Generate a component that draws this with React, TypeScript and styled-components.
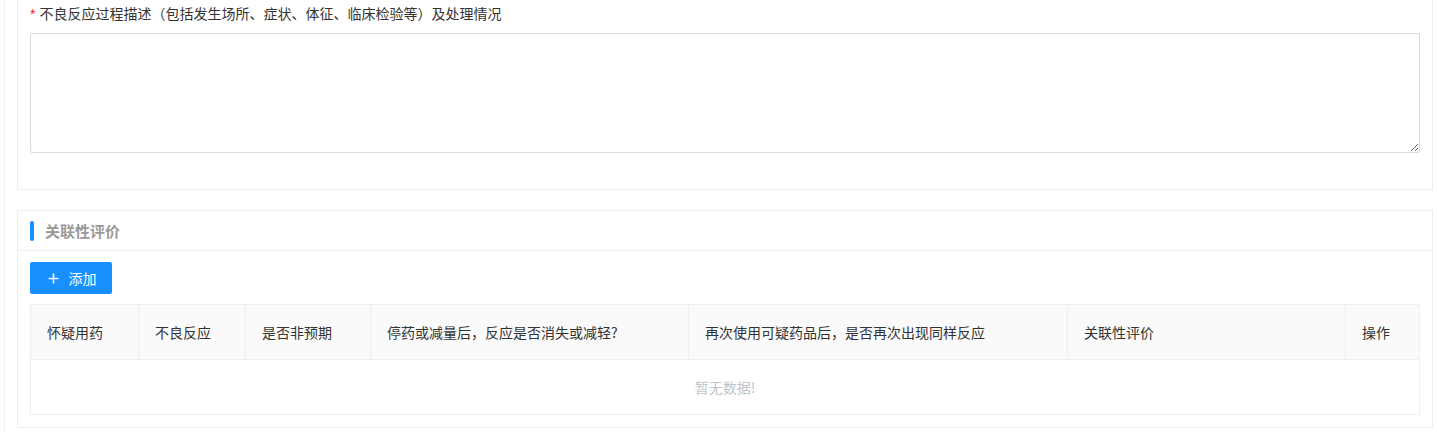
import React from "react";
import styled, { createGlobalStyle } from "styled-components";
import { Plus } from "lucide-react";

const GlobalStyle = createGlobalStyle`
  html, body {
    margin: 0;
    padding: 0;
    background: #fff;
    font-family: "Noto Sans CJK SC", "Noto Sans", sans-serif;
    font-size: 14px;
    color: #333;
  }
  * { box-sizing: border-box; }
`;

const Page = styled.div`
  margin-left: 4px;
  border-left: 1px solid #eeeeee;
  padding: 0 4px 0 12px;
  height: 432px;
  overflow: hidden;
`;

const Card = styled.section<{ $openTop?: boolean }>`
  border: 1px solid #eeeeee;
  border-top: ${(p) => (p.$openTop ? "none" : "1px solid #eeeeee")};
  background: #fff;
  & + & {
    margin-top: 20px;
  }
`;

const FormBody = styled.div`
  padding: 3px 12px 36px;
`;

const Label = styled.div`
  line-height: 20px;
  font-size: 14px;
  color: #333;
  margin-bottom: 9px;
`;

const Required = styled.span`
  color: #f5222d;
  margin-right: 4px;
  font-family: "Liberation Sans", sans-serif;
`;

const TextArea = styled.textarea`
  display: block;
  width: 100%;
  height: 120px;
  border: 1px solid #d9d9d9;
  border-radius: 2px;
  padding: 6px 10px;
  font-family: inherit;
  font-size: 14px;
  outline: none;
  resize: vertical;
`;

const CardHeader = styled.div`
  height: 40px;
  border-bottom: 1px solid #eeeeee;
  display: flex;
  align-items: center;
  padding: 0 12px;
`;

const Bar = styled.span`
  width: 4px;
  height: 20px;
  border-radius: 2px;
  background: #1890ff;
`;

const Title = styled.h3`
  margin: 0 0 0 11px;
  font-size: 15px;
  font-weight: bold;
  color: #999999;
`;

const CardBody = styled.div`
  padding: 11px 12px 12px;
`;

const AddButton = styled.button`
  width: 82px;
  height: 32px;
  border: none;
  border-radius: 2px;
  background: #1890ff;
  color: #fff;
  font-family: inherit;
  font-size: 14px;
  display: flex;
  align-items: center;
  justify-content: center;
  gap: 8px;
  cursor: pointer;
  margin-bottom: 10px;
`;

const Table = styled.div`
  border: 1px solid #eeeeee;
`;

const HeadRow = styled.div`
  display: grid;
  grid-template-columns: 107px 107px 125px 318px 379px 278px 1fr;
  background: #fafafa;
  border-bottom: 1px solid #eeeeee;
`;

const HeadCell = styled.div`
  height: 54px;
  display: flex;
  align-items: center;
  padding-left: 16px;
  color: #333;
  font-size: 14px;
  & + & {
    border-left: 1px solid #eeeeee;
  }
`;

const EmptyRow = styled.div`
  height: 54px;
  display: flex;
  align-items: center;
  justify-content: center;
  color: #c0c4cc;
  font-size: 14px;
`;

const columns = [
  "怀疑用药",
  "不良反应",
  "是否非预期",
  "停药或减量后，反应是否消失或减轻?",
  "再次使用可疑药品后，是否再次出现同样反应",
  "关联性评价",
  "操作",
];

export default function App() {
  return (
    <>
      <GlobalStyle />
      <Page>
        <Card $openTop>
          <FormBody>
            <Label>
              <Required>*</Required>
              不良反应过程描述（包括发生场所、症状、体征、临床检验等）及处理情况
            </Label>
            <TextArea />
          </FormBody>
        </Card>
        <Card>
          <CardHeader>
            <Bar />
            <Title>关联性评价</Title>
          </CardHeader>
          <CardBody>
            <AddButton>
              <Plus size={15} strokeWidth={2.5} />
              添加
            </AddButton>
            <Table>
              <HeadRow>
                {columns.map((c) => (
                  <HeadCell key={c}>{c}</HeadCell>
                ))}
              </HeadRow>
              <EmptyRow>暂无数据!</EmptyRow>
            </Table>
          </CardBody>
        </Card>
      </Page>
    </>
  );
}
